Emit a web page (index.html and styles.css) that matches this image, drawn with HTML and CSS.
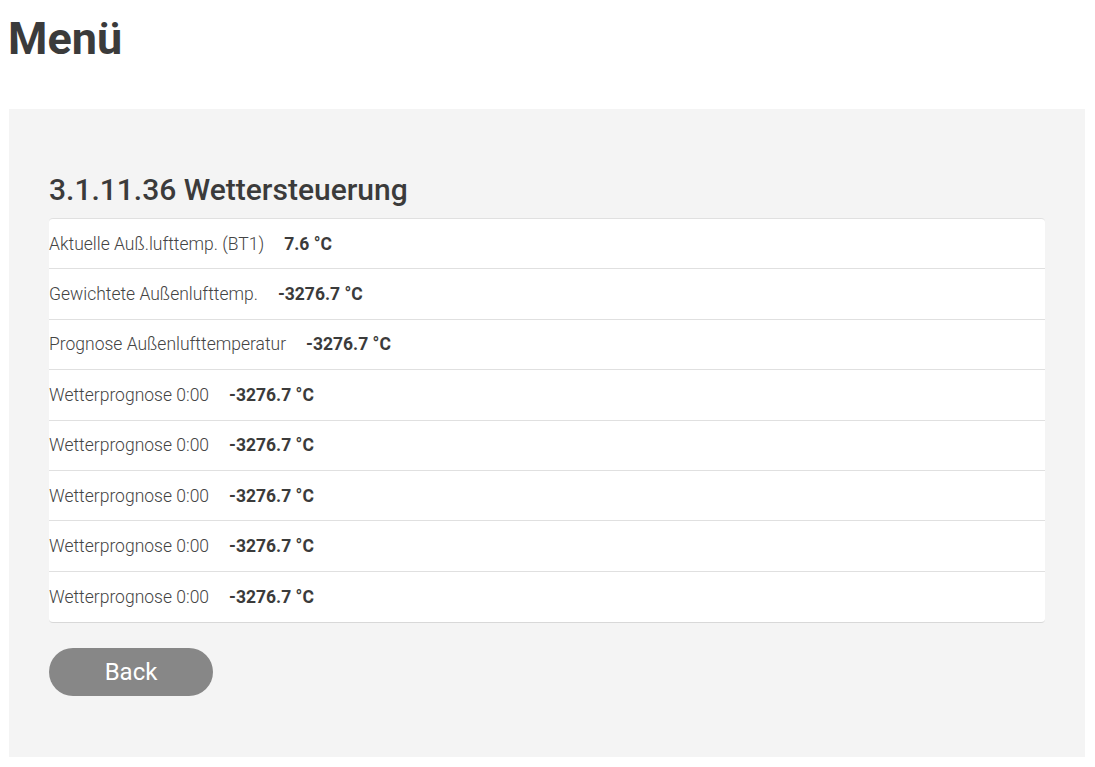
FILE: index.html
```html
<!DOCTYPE html>
<html lang="de">
<head>
  <meta charset="UTF-8">
  <title>Menü</title>
  <link rel="stylesheet" href="styles.css">
</head>
<body>

  <h1 class="titel">Menü</h1>

  <div class="panel">
    <h2>3.1.11.36 Wettersteuerung</h2>

    <div class="liste">
      <div class="zeile">
        <span class="name">Aktuelle Auß.lufttemp. (BT1)</span>
        <span class="wert">7.6 °C</span>
      </div>
      <div class="zeile">
        <span class="name">Gewichtete Außenlufttemp.</span>
        <span class="wert">-3276.7 °C</span>
      </div>
      <div class="zeile">
        <span class="name">Prognose Außenlufttemperatur</span>
        <span class="wert">-3276.7 °C</span>
      </div>
      <div class="zeile">
        <span class="name">Wetterprognose 0:00</span>
        <span class="wert">-3276.7 °C</span>
      </div>
      <div class="zeile">
        <span class="name">Wetterprognose 0:00</span>
        <span class="wert">-3276.7 °C</span>
      </div>
      <div class="zeile">
        <span class="name">Wetterprognose 0:00</span>
        <span class="wert">-3276.7 °C</span>
      </div>
      <div class="zeile">
        <span class="name">Wetterprognose 0:00</span>
        <span class="wert">-3276.7 °C</span>
      </div>
      <div class="zeile">
        <span class="name">Wetterprognose 0:00</span>
        <span class="wert">-3276.7 °C</span>
      </div>
    </div>

    <button class="btn-back">Back</button>
  </div>

</body>
</html>
```

FILE: styles.css
```css
* {
  box-sizing: border-box;
}

body {
  margin: 8px 10px 8px 8px;
  font-family: Roboto, sans-serif;
  background: #fff;
  color: #3c3c3c;
}

.titel {
  margin: 4px 0 44px;
  font-size: 45px;
  font-weight: bold;
  color: #3b3b3b;
}

.panel {
  margin-left: 1px;
  background: #f4f4f4;
  padding: 63px 40px 61px;
}

.panel h2 {
  margin: 0 0 11px;
  font-size: 30px;
  font-weight: 500;
  color: #3b3b3b;
}

.liste {
  background: #fff;
  border-top: 1px solid #e0e0e0;
  border-bottom: 1px solid #d8d8d8;
  border-radius: 4px;
}

.zeile {
  display: flex;
  align-items: center;
  gap: 20px;
  height: 50.4px;
  font-size: 17.5px;
  border-bottom: 1px solid #e0e0e0;
}

.zeile:last-child {
  border-bottom: none;
}

.name {
  font-weight: 300;
  color: #444;
}

.wert {
  font-weight: bold;
  color: #3b3b3b;
}

.btn-back {
  display: block;
  margin-top: 25px;
  width: 164px;
  height: 48px;
  border: none;
  border-radius: 24px;
  background: #878787;
  color: #fff;
  font-family: Roboto, sans-serif;
  font-size: 24px;
  cursor: pointer;
}
```
